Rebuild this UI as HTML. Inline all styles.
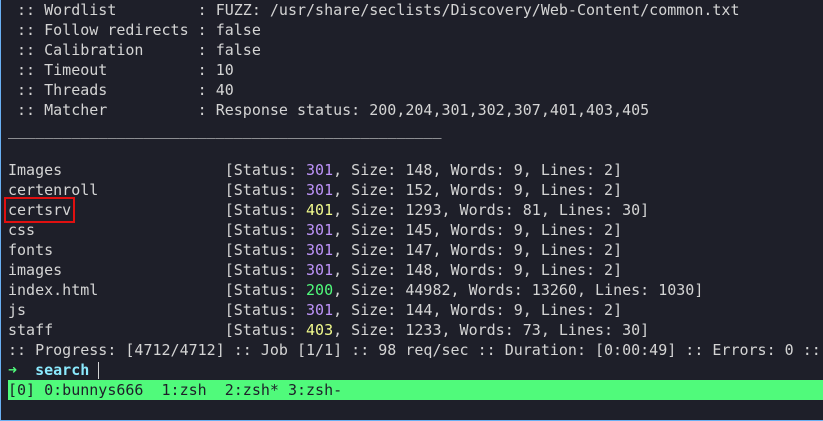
<!DOCTYPE html>
<html><head><style>
html,body{margin:0;padding:0;}
body{width:823px;height:421px;background:#1e1f29;overflow:hidden;position:relative;}
.b{position:absolute;left:0;top:0;width:823px;height:421px;box-sizing:border-box;border-left:1px solid #6ab0f3;border-bottom:1px solid #6ab0f3;}
pre{position:absolute;left:8px;top:0;margin:0;font-family:"DejaVu Sans Mono","Liberation Mono",monospace;font-size:15px;line-height:20px;color:#d4d4d4;white-space:pre;}
.p{color:#bd93f9}.y{color:#f1fa8c}.g{color:#50fa7b}.c{color:#8be9fd;font-weight:bold}
.box{outline:2.5px solid #e01010;outline-offset:2px;}
.bar{position:absolute;left:8px;top:380px;width:815px;height:20px;background:#50fa7b;}
.cur{position:absolute;left:98px;top:362px;width:1px;height:17px;background:#d4d4d4;}
</style></head><body>
<div class="bar"></div>
<div class="cur"></div>
<pre> :: Wordlist         : FUZZ: /usr/share/seclists/Discovery/Web-Content/common.txt
 :: Follow redirects : false
 :: Calibration      : false
 :: Timeout          : 10
 :: Threads          : 40
 :: Matcher          : Response status: 200,204,301,302,307,401,403,405
________________________________________________

Images                  [Status: <span class="p">301</span>, Size: 148, Words: 9, Lines: 2]
certenroll              [Status: <span class="p">301</span>, Size: 152, Words: 9, Lines: 2]
<span class="box">certsrv</span>                 [Status: <span class="y">401</span>, Size: 1293, Words: 81, Lines: 30]
css                     [Status: <span class="p">301</span>, Size: 145, Words: 9, Lines: 2]
fonts                   [Status: <span class="p">301</span>, Size: 147, Words: 9, Lines: 2]
images                  [Status: <span class="p">301</span>, Size: 148, Words: 9, Lines: 2]
index.html              [Status: <span class="g">200</span>, Size: 44982, Words: 13260, Lines: 1030]
js                      [Status: <span class="p">301</span>, Size: 144, Words: 9, Lines: 2]
staff                   [Status: <span class="y">403</span>, Size: 1233, Words: 73, Lines: 30]
:: Progress: [4712/4712] :: Job [1/1] :: 98 req/sec :: Duration: [0:00:49] :: Errors: 0 ::
<span class="g">➜</span>  <span class="c">search</span>
<span style="color:#1e1f29">[0] 0:bunnys666  1:zsh  2:zsh* 3:zsh-</span></pre>
<div class="b"></div>
</body></html>
